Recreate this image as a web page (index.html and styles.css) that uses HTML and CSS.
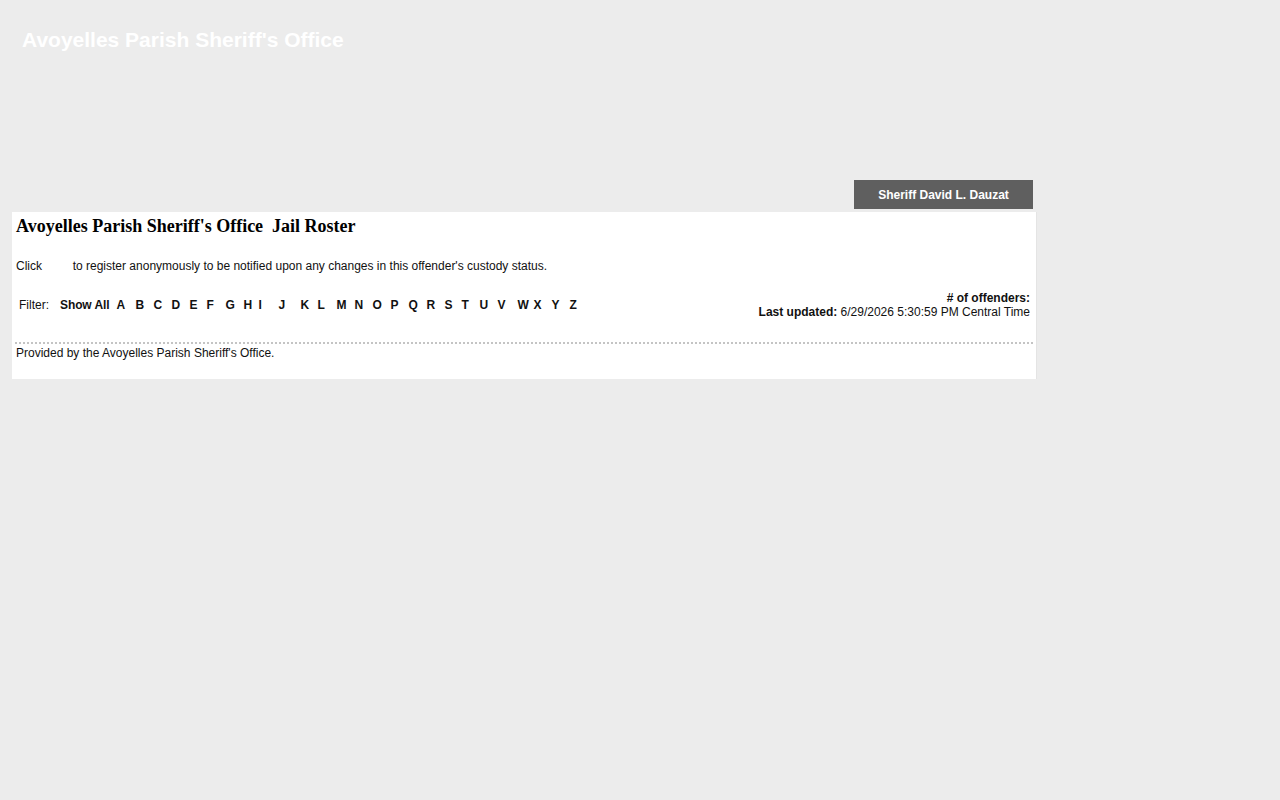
FILE: index.html
```html
<!DOCTYPE html>
<html>
<head>
<meta charset="utf-8">
<title>Avoyelles Parish Sheriff's Office Jail Roster</title>
<link rel="stylesheet" href="styles.css">
</head>
<body>
<div class="page">
  <div class="masthead">
    <div class="site-title">Avoyelles Parish Sheriff's Office</div>
  </div>
  <div class="tabs">
    <a class="tab">Sheriff David L. Dauzat</a>
  </div>
  <div class="panel">
    <h1 class="roster-title">Avoyelles Parish Sheriff's Office&nbsp; Jail Roster</h1>
    <p class="notify">Click <span class="notify-img"></span> to register anonymously to be notified upon any changes in this offender's custody status.</p>
    <div class="filter-row">
      <div class="filter">
        <span class="filter-label">Filter:</span>
        <a class="show-all">Show All</a>
        <a class="l" style="width:19px">A</a><a class="l" style="width:18px">B</a><a class="l" style="width:18px">C</a><a class="l" style="width:18px">D</a><a class="l" style="width:17px">E</a><a class="l" style="width:19px">F</a><a class="l" style="width:18px">G</a><a class="l" style="width:15px">H</a><a class="l" style="width:20px">I</a><a class="l" style="width:22px">J</a><a class="l" style="width:17px">K</a><a class="l" style="width:19px">L</a><a class="l" style="width:18px">M</a><a class="l" style="width:18px">N</a><a class="l" style="width:18px">O</a><a class="l" style="width:18px">P</a><a class="l" style="width:18px">Q</a><a class="l" style="width:18px">R</a><a class="l" style="width:17px">S</a><a class="l" style="width:18px">T</a><a class="l" style="width:18px">U</a><a class="l" style="width:20px">V</a><a class="l" style="width:16px">W</a><a class="l" style="width:18px">X</a><a class="l" style="width:18px">Y</a><a class="l" style="width:18px">Z</a>
      </div>
      <div class="stats">
        <div><b>#&nbsp;of offenders:</b></div>
        <div><b>Last updated:</b> 6/29/2026 5:30:59 PM Central Time</div>
      </div>
    </div>
    <div class="footer">Provided by the Avoyelles Parish Sheriff's Office.</div>
  </div>
</div>
</body>
</html>
```

FILE: styles.css
```css
html, body {
  margin: 0;
  padding: 0;
  background: #ececec;
  font-family: "Liberation Sans", Arial, sans-serif;
  color: #111;
}
.page {
  width: 1025px;
  margin-left: 12px;
}
.masthead {
  height: 180px;
  padding: 28px 0 0 10px;
  box-sizing: border-box;
}
.site-title {
  color: #fff;
  font-weight: bold;
  font-size: 21px;
  line-height: 24px;
}
.tabs {
  display: flex;
  justify-content: flex-end;
  padding-right: 4px;
  height: 32px;
}
.tab {
  width: 179px;
  height: 29px;
  background: #5f5f5f;
  color: #fff;
  font-weight: bold;
  font-size: 12px;
  display: flex;
  align-items: center;
  justify-content: center;
}
.panel {
  background: #fff;
  padding: 4px 3px 20px 4px;
  border-right: 1px solid #e4e4e4;
  height: 167px;
  box-sizing: border-box;
}
.roster-title {
  margin: 0;
  font-family: "Liberation Serif", "Times New Roman", serif;
  font-size: 18px;
  line-height: 21px;
  font-weight: bold;
  color: #000;
}
.notify {
  margin: 22px 0 0 0;
  font-size: 12px;
  line-height: 14px;
}
.notify-img {
  display: inline-block;
  width: 24px;
}
.filter-row {
  display: flex;
  justify-content: space-between;
  align-items: center;
  margin-top: 18px;
  padding: 0 3px 0 3px;
  font-size: 12px;
  line-height: 14px;
}
.filter {
  display: flex;
  align-items: center;
}
.filter-label {
  margin-right: 11px;
}
.show-all {
  font-weight: bold;
  margin-right: 7px;
  letter-spacing: -0.1px;
}
.l {
  display: inline-block;
  font-weight: bold;
}
.stats {
  text-align: right;
}
.footer {
  margin-top: 23px;
  border-top: 2px dotted #c4c4c4;
  padding-top: 2px;
  font-size: 12px;
  line-height: 14px;
  margin-left: -1px;
  padding-left: 1px;
}
```
